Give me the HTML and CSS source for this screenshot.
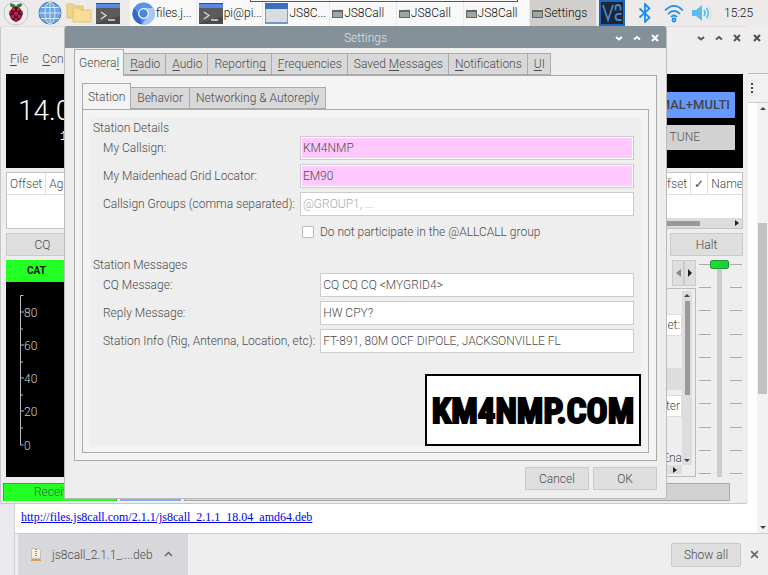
FILE: index.html
```html
<!DOCTYPE html>
<html lang="en">
<head>
<meta charset="utf-8">
<title>Settings</title>
<link rel="stylesheet" href="styles.css">
</head>
<body>
<svg width="0" height="0" class="defs" aria-hidden="true">
  <symbol id="terminal" viewBox="0 0 24 21">
    <path fill="#4a4a4a" d="M0 0h24v21H0z"/><path fill="#5b5b5b" d="M0 5h24v8L0 20z"/><path fill="#5b87ea" d="M0 1h24v4H0z"/>
    <path fill="none" stroke="#ddd" stroke-width="1.3" d="M5 9l5 3.500-5 3.500M12 17h7"/>
  </symbol>
  <symbol id="win" viewBox="0 0 11 9">
    <path fill="#666" d="M0 1h11v8H0z"/><path fill="#9aa9a5" d="M1 3h9v5H1z"/><path fill="#ddd" d="M6 0h4v1H6z"/>
  </symbol>
  <symbol id="down" viewBox="0 0 8 8"><path fill="none" stroke="currentColor" stroke-width="2" d="M1 3l3 2.500L7 3"/></symbol>
  <symbol id="up" viewBox="0 0 8 8"><path fill="none" stroke="currentColor" stroke-width="2" d="M1 5.500L4 3l3 2.500"/></symbol>
  <symbol id="close" viewBox="0 0 8 8"><path fill="none" stroke="currentColor" stroke-width="2" d="M1 1l6 6M7 1L1 7"/></symbol>
</svg>

<header class="taskbar">
  <nav class="launchers" aria-label="Launchers">
    <button aria-label="Menu"><svg width="26" height="26" viewBox="0 0 26 26"><circle cx="13" cy="13" r="12" fill="#eee" stroke="#c8c8c8"/><path fill="#397b32" d="M12.500 8C8 8 6.500 6 7 3.500c3-.5 5 .5 6 3 1-2.500 3-3.500 6-3C19.500 6 17.500 8 12.500 8z"/><path fill="#3b1020" d="M13 7c3 0 4 1 5 3 2 1 2.500 4 1 6-.5 3-3 5-6 6-3-1-5.500-3-6-6-1.500-2-1-5 1-6 1-2 2-3 5-3z"/><g fill="#c51a4a"><circle cx="13" cy="13.500" r="2.300"/><circle cx="10.500" cy="9.500" r="1.800"/><circle cx="15.500" cy="9.500" r="1.800"/><circle cx="9.500" cy="16.500" r="2"/><circle cx="16.500" cy="16.500" r="2"/><circle cx="13" cy="19.500" r="1.700"/><circle cx="7.700" cy="12.500" r="1.300"/><circle cx="18.300" cy="12.500" r="1.300"/></g></svg></button>
    <button aria-label="Web browser"><svg width="24" height="24" viewBox="0 0 24 24"><circle cx="12" cy="12" r="11" fill="#6da4e3" stroke="#4679b6"/><g fill="none" stroke="#d5e6f7"><ellipse cx="12" cy="12" rx="5" ry="11"/><path d="M12 1v22M1 12h22M3 6.500h18M3 17.500h18"/></g></svg></button>
    <button aria-label="File manager"><svg width="26" height="22" viewBox="0 0 26 22"><path fill="#f0d38b" stroke="#e2c075" d="M1 2h6l2 2h8v12H1z"/><path fill="#f9dc98" stroke="#e2c075" d="M7 6h6l2 2h10v12H7z"/></svg></button>
    <button aria-label="Terminal"><svg width="24" height="21"><use href="#terminal"/></svg></button>
  </nav>
  <div class="tasks">
    <button class="task"><svg width="23" height="23" viewBox="0 0 23 23"><circle cx="11.500" cy="11.500" r="11" fill="#5a91e8"/><path fill="#3568c7" d="M2 6l6 8 2 8.500A11 11 0 0 1 2 6z"/><path fill="#a5c6f7" d="M11.500 6h10A11 11 0 0 1 10 22.500l5.500-8z"/><circle cx="11.500" cy="11.500" r="5.400" fill="#fff"/><circle cx="11.500" cy="11.500" r="4.200" fill="#4a86e8"/></svg><span>files.j...</span></button>
    <button class="task"><svg width="24" height="21"><use href="#terminal"/></svg><span>pi@pi...</span></button>
    <button class="task"><svg width="23" height="21" viewBox="0 0 23 21"><path fill="#d9dde1" stroke="#8c98a8" d="M.5.500h22v20H.5z"/><path fill="#3c70bd" d="M0 0h23v6H0z"/><path fill="#7597c8" d="M0 19h23v2H0z"/></svg><span>JS8C...</span></button>
    <button class="task"><svg width="11" height="9"><use href="#win"/></svg><span>JS8Call</span></button>
    <button class="task"><svg width="11" height="9"><use href="#win"/></svg><span>JS8Call</span></button>
    <button class="task"><svg width="11" height="9"><use href="#win"/></svg><span>JS8Call</span></button>
    <button class="task active"><svg width="11" height="9"><use href="#win"/></svg><span>Settings</span></button>
  </div>
  <div class="tray">
    <svg width="26" height="26" viewBox="0 0 26 26"><path fill="#1f2630" stroke="#1d66c2" stroke-width="2" d="M1 1h24v24H1z"/><g fill="none" stroke="#3f87dc" stroke-width="1.800"><path d="M4 5l5 15 5-15M16.500 10.500V7.500Q16.500 5 19 5t2.500 2.500v3M22.500 14h-3q-3 0-3 3t3 3h3"/></g></svg>
    <svg width="14" height="20" viewBox="0 0 14 20"><path fill="none" stroke="#1b8df2" stroke-width="1.800" d="M1.500 5.500l10 9L7 19V1l4.500 4.500-10 9"/></svg>
    <svg width="20" height="19" viewBox="0 0 20 19"><g fill="none" stroke="#1b8df2" stroke-width="1.700"><path d="M1 6.500q9-9 18 0M4 10q6-6 12 0M7 13q3-3 6 0"/><circle cx="10" cy="16" r="1.600"/></g></svg>
    <svg width="20" height="16" viewBox="0 0 20 16"><path fill="#59bcf5" d="M0 5h4l6-5v16l-6-5H0z"/><path fill="none" stroke="#59bcf5" stroke-width="1.600" d="M12 5q2 3 0 6M14.500 3q3.500 5 0 10"/><path fill="none" stroke="#d2d8dc" d="M17 1q4 7 0 14"/></svg>
    <time>15:25</time>
  </div>
</header>
<div class="tip-edge"></div>

<section class="browser" aria-label="Browser">
  <div class="browser-title"><svg width="8" height="8"><use href="#close"/></svg></div>
  <div class="browser-tools"><svg width="4" height="12" viewBox="0 0 4 12"><path fill="#444" d="M1 1h2v2H1zM1 5h2v2H1zM1 9h2v2H1z"/></svg></div>
  <div class="browser-view">
    <div class="page"><a href="http://files.js8call.com/2.1.1/js8call_2.1.1_18.04_amd64.deb">http://files.js8call.com/2.1.1/js8call_2.1.1_18.04_amd64.deb</a></div>
    <div class="vbar"><i class="tri-up"></i><i class="vthumb"></i><i class="tri-down"></i></div>
  </div>
  <footer class="downloads">
    <button class="download"><svg width="10" height="13" viewBox="0 0 10 13"><path fill="#f7efdf" stroke="#c9c1b6" d="M.5.500h7l2 2v8h-9z"/><path stroke="#c98937" stroke-width="2" stroke-dasharray="1 1" d="M5 1v8"/><path fill="#d6a157" d="M0 11h10v2H0z"/></svg><span>js8call_2.1.1_....deb</span><svg width="9" height="9" viewBox="0 0 9 9"><path fill="none" stroke="#666" stroke-width="1.500" d="M1 6l3.500-3.500L8 6"/></svg></button>
    <button class="btn show-all">Show all</button>
    <button class="plain" aria-label="Close downloads"><svg width="9" height="9" viewBox="0 0 8 8"><path stroke="#666" stroke-width="1.500" d="M1 1l6 6M7 1L1 7"/></svg></button>
  </footer>
</section>

<section class="js8" aria-label="JS8Call">
  <div class="js8-title"><svg width="8" height="8"><use href="#down"/></svg><svg width="8" height="8"><use href="#up"/></svg><svg width="8" height="8"><use href="#close"/></svg></div>
  <nav class="menubar"><a href="#"><u>F</u>ile</a><a href="#"><u>C</u>on</a></nav>
  <div class="display">
    <div class="freq"><div class="digits">14.0</div><div class="date">1</div></div>
    <div class="modes"><button class="multi">NORMAL+MULTI</button><button class="tune">TUNE</button></div>
  </div>
  <div class="lists">
    <table class="list"><thead><tr><th>Offset</th><th>Age</th></tr></thead></table>
    <div class="calls">
      <table class="list"><thead><tr><th>Offset</th><th>✓</th><th>Name</th></tr></thead></table>
      <div class="hbar"><i class="hthumb"></i><i class="tri-right"></i></div>
    </div>
  </div>
  <div class="actions"><button class="btn">CQ</button><button class="btn">Halt</button></div>
  <div class="main">
    <div class="meter">
      <button class="cat">CAT</button>
      <svg class="scale" width="60" height="195" viewBox="0 0 60 195" role="img" aria-label="Level scale">
        <path fill="none" stroke="#bbb" d="M17.500 13.500h-3V163h3M15 30h3M15 47h2M15 63h3M15 80h2M15 96h3M15 113h2M15 129h3M15 146h2"/>
        <g class="scale-text"><text x="18" y="35">80</text><text x="18" y="68">60</text><text x="18" y="101">40</text><text x="18" y="134">20</text><text x="18" y="168">0</text></g>
      </svg>
    </div>
    <div class="control">
      <div class="arrows"><button aria-label="Previous tab"><i class="tri-left"></i></button><button aria-label="Next tab"><i class="tri-right"></i></button></div>
      <div class="control-pane">
        <div class="fields"><span class="field first">Offset:</span><span class="shade"></span><span class="field">Filter</span><span class="more">Ena</span></div>
        <div class="control-bar"><i class="tri-up"></i><i class="cthumb"></i><i class="tri-down"></i></div>
        <div class="control-hbar"><i class="tri-right"></i></div>
      </div>
    </div>
    <div class="slider">
      <div class="ticks"><i></i><i></i><i></i><i></i><i></i><i></i><i></i><i></i><i></i><i></i></div>
      <input type="range" class="power" aria-label="Power" value="100">
    </div>
  </div>
  <div class="status"><span class="receiving">Receiving</span><span class="mode"></span><span class="progress"></span></div>
</section>

<section class="dialog" role="dialog" aria-label="Settings">
  <div class="dialog-title"><h1>Settings</h1><div class="wm"><svg width="8" height="8"><use href="#down"/></svg><svg width="8" height="8"><use href="#up"/></svg><svg width="8" height="8"><use href="#close"/></svg></div></div>
  <div class="dialog-body">
    <div class="tabs outer">
      <button class="tab on">Genera<u>l</u></button><button class="tab"><u>R</u>adio</button><button class="tab"><u>A</u>udio</button><button class="tab">Reportin<u>g</u></button><button class="tab"><u>F</u>requencies</button><button class="tab">Saved <u>M</u>essages</button><button class="tab"><u>N</u>otifications</button><button class="tab"><u>U</u>I</button>
    </div>
    <div class="pane">
      <div class="tabs">
        <button class="tab on">Station</button><button class="tab">Behavior</button><button class="tab">Networking &amp; Autoreply</button>
      </div>
      <div class="pane inner">
        <form class="form">
          <h2>Station Details</h2>
          <div class="grid details">
            <label for="call">My Callsign:</label><input class="pink" id="call" value="KM4NMP">
            <label for="loc">My Maidenhead Grid Locator:</label><input class="pink" id="loc" value="EM90">
            <label for="groups">Callsign Groups (comma separated):</label><input id="groups" placeholder="@GROUP1, ...">
            <div class="check"><input type="checkbox" id="allcall"><label for="allcall">Do not participate in the @ALLCALL group</label></div>
          </div>
          <h2>Station Messages</h2>
          <div class="grid messages">
            <label for="cq">CQ Message:</label><input id="cq" value="CQ CQ CQ &lt;MYGRID4&gt;">
            <label for="reply">Reply Message:</label><input id="reply" value="HW CPY?">
            <label for="info">Station Info (Rig, Antenna, Location, etc):</label><input id="info" value="FT-891, 80M OCF DIPOLE, JACKSONVILLE FL">
          </div>
        </form>
        <div class="badge">KM4NMP.COM</div>
      </div>
    </div>
    <div class="dialog-buttons"><button class="btn">Cancel</button><button class="btn">OK</button></div>
  </div>
</section>
</body>
</html>
```
FILE: styles.css
```css
* { box-sizing: border-box; }
html, body { height: 100%; }
body {
  margin: 0;
  overflow: hidden;
  position: relative;
  background: #e9e9ef;
  color: #4c4c4c;
  font: 300 12px/16px Roboto, "Open Sans", sans-serif;
}
button, input { font: inherit; color: inherit; margin: 0; padding: 0; border: 0; border-radius: 0; }
button { background: none; white-space: nowrap; }
svg, i { display: block; flex: none; }
a { color: inherit; text-decoration: none; }
u { text-underline-offset: 2px; }
.defs { position: absolute; }

/* Task bar */
.taskbar { display: flex; height: 26px; background: #edebea; color: #111; }
.launchers { display: flex; align-items: center; gap: 4px; width: 130px; padding-left: 3px; }
.launchers button:first-child { margin-right: 5px; }
.tasks { flex: 1; display: grid; grid-template-columns: repeat(7, minmax(0, 1fr)); background: #e9e9e9; column-gap: 1px; }
.task { display: flex; align-items: center; gap: 1px; padding-left: 2px; background: #f8f8f8; overflow: hidden; }
.task.active { background: #d0cfcc; }
.tray { display: flex; align-items: center; width: 172px; padding-left: 3px; }
.tray svg:nth-child(2) { margin-left: 13px; }
.tray svg:nth-child(3) { margin-left: 12px; }
.tray svg:nth-child(4) { margin-left: 8px; }
.tray time { margin-left: 12px; }
.tip-edge { position: absolute; left: 250px; top: 0; width: 268px; height: 2px; border: 1px solid #555; border-top: 0; }

/* Browser window */
.browser { position: absolute; inset: 26px 0 0 14px; display: flex; flex-direction: column; background: #fff; border-left: 1px solid #d0d0d0; }
.browser-title { display: flex; justify-content: flex-end; height: 48px; padding: 8px 7px; background: #eee; border-bottom: 1px solid #bbb; }
.browser-tools { display: flex; justify-content: flex-end; align-items: center; height: 29px; padding-right: 14px; background: #f1f1f1; border-bottom: 1px solid #ccc; }
.browser-view { flex: 1; display: flex; min-height: 0; }
.page { flex: 1; display: flex; align-items: flex-end; padding: 0 6px 8px; }
.page a { color: #00e; text-decoration: underline; font: 400 12px/16px "Liberation Serif", serif; }
.vbar { display: flex; flex-direction: column; align-items: center; width: 11px; padding: 4px 0; background: #f2f2f2; }
.vthumb { width: 9px; height: 171px; margin: 113px 0 auto; background: #c1c1c1; }
.downloads { display: flex; align-items: center; height: 42px; padding-right: 9px; background: #eee; border-top: 1px solid #ccc; }
.download { display: flex; align-items: center; align-self: stretch; gap: 11px; width: 170px; padding-left: 13px; margin-left: 3px; background: #d8d8dc; }
.show-all { width: 70px; height: 24px; margin-left: auto; margin-right: 9px; border-radius: 2px; }

.tri-up, .tri-down { border: 3px solid transparent; }
.tri-up { border-top: 0; border-bottom-color: #444; }
.tri-down { border-bottom: 0; border-top-color: #444; }
.tri-left, .tri-right { border: 3px solid transparent; }
.tri-left { border-left: 0; border-right: 5px solid #888; }
.tri-right { border-right: 0; border-left: 4px solid #222; }
.arrows i { border-top-width: 4px; border-bottom-width: 4px; }

.btn { background: #dedede; border: 1px solid #c9c9c9; box-shadow: inset 0 0 0 1px #e0e0e0; }

/* Main application window */
.js8 { position: absolute; inset: 26px 20px 71px 0; display: flex; flex-direction: column; padding: 0 5px; background: #eee; border: 1px solid #c8c8c8; border-right: 0; border-top-color: #ddd; border-radius: 3px; }
.js8-title { display: flex; flex: none; justify-content: flex-end; gap: 10px; height: 24px; padding: 7px 2px 0; color: #555; }
.menubar { display: flex; flex: none; gap: 14px; height: 23px; padding-left: 4px; }
.display { display: flex; flex: none; justify-content: space-between; height: 94px; background: #000; color: #fff; }
.freq { padding: 21px 0 0 12px; }
.digits { font-size: 28px; line-height: 32px; }
.date { padding: 2px 0 0 42px; font-family: "Liberation Mono", monospace; }
.modes { display: flex; flex-direction: column; gap: 7px; padding: 18px 8px; width: 134px; color: #444; }
.modes button { height: 26px; border-radius: 1px; text-align: right; }
.modes .multi { background: #69f; font-size: 13px; font-weight: 500; padding-right: 5px; }
.modes .tune { background: #d2d2d2; padding-right: 35px; color: #555; }
.lists { display: flex; flex: none; justify-content: space-between; height: 57px; margin-top: 4px; background: #fff; border: 1px solid #c4c4c4; overflow: hidden; }
.list { border-collapse: collapse; height: 22px; }
.list th { font-weight: 300; padding: 0 3px; border-right: 1px solid #ddd; border-bottom: 1px solid #ddd; }
.calls { display: flex; flex-direction: column; justify-content: space-between; width: 90px; }
.calls th:last-child { border-right: 0; padding-right: 0; }
.hbar { display: flex; justify-content: space-between; align-items: center; height: 10px; padding-right: 3px; background: #ddd; }
.hthumb { width: 48px; height: 5px; background: #999; }
.actions { display: flex; justify-content: space-between; margin-top: 4px; }
.actions .btn { width: 73px; height: 23px; }
.main { flex: 1; display: flex; min-height: 0; margin-top: 4px; }
.meter { flex: 1; background: #000; }
.cat { display: block; width: 100%; height: 22px; padding-left: 21px; background: #2f2; color: #111; text-align: left; font-size: 10px; font-weight: 700; }
.scale-text { fill: #ccc; }
.control { display: flex; flex-direction: column; width: 60px; }
.arrows { display: flex; flex: none; justify-content: flex-end; height: 26px; }
.arrows button { display: grid; place-items: center; width: 12px; background: #dedede; border: 1px solid #ccc; }
.control-pane { flex: 1; display: grid; grid-template: minmax(0, 1fr) 9px / 1fr 10px; min-height: 0; margin-top: 2px; padding: 2px 3px; border: 1px solid #bbb; border-left: 0; }
.fields { display: flex; flex-direction: column; text-align: right; overflow: hidden; }
.fields > * { flex: none; }
.field { padding: 2px 1px; background: #fff; border: 1px solid #ddd; }
.field.first { margin-top: 23px; }
.shade { height: 22px; margin: 32px 0 5px; background: #ddd; }
.more { margin-top: 33px; }
.control-bar { display: flex; flex-direction: column; align-items: center; padding: 3px 0; background: #ddd; }
.cthumb { width: 5px; height: 94px; background: #999; margin: 4px 0 auto; }
.control-hbar { display: flex; align-items: center; justify-content: flex-end; padding-right: 5px; background: #ddd; }
.slider { position: relative; display: grid; width: 47px; }
.slider > * { grid-area: 1 / 1; }
.ticks { display: flex; flex-direction: column; justify-content: space-between; padding: 4px 1px 3px 3px; }
.ticks i { height: 1px; border: solid #aaa; border-width: 0 12px; }
.power { appearance: none; writing-mode: vertical-lr; direction: rtl; justify-self: center; width: 19px; height: 100%; background: linear-gradient(90deg, transparent 7px, #ccc 7px 12px, transparent 12px); }
.power::-webkit-slider-thumb { appearance: none; width: 19px; height: 9px; border: 1px solid #1b9c35; border-radius: 2px; background: linear-gradient(110deg, #18e622, #23c44d); }
.status { display: flex; flex: none; align-items: stretch; height: 18px; margin: 6px 13px 2px -3px; }
.receiving { width: 114px; padding-left: 30px; background: #2f2; border: 1px solid #3a3; border-bottom: 0; color: #363; }
.mode { width: 61px; margin-left: 3px; background: #8ae; }
.progress { flex: 1; margin-left: 3px; background: #d2d2d2; border: 1px solid #aaa; }

/* Settings dialog */
.dialog { position: absolute; inset: 26px 101px 76px 64px; display: flex; flex-direction: column; background: #eee; border: solid #bbb; border-width: 0 1px 1px; border-radius: 3px 3px 0 0; overflow: hidden; }
.dialog-title { display: grid; grid-template-columns: 1fr auto 1fr; align-items: center; height: 22px; margin: 0 -1px; padding-top: 2px; background: #849199; color: #dde2e5; flex: none; }
.dialog-title h1 { grid-column: 2; margin: 0; font: inherit; }
.wm { display: flex; justify-content: flex-end; gap: 10px; padding-right: 8px; color: #fff; }
.dialog-body { flex: 1; display: flex; flex-direction: column; padding: 1px 9px 8px; min-height: 0; }
.tabs { display: flex; align-items: flex-end; position: relative; }
.tab { height: 22px; padding: 0 6px; background: #d8d8d8; border: 1px solid #aaa; border-left: 0; }
.outer .tab { padding: 0 5px 0 6px; }
.tabs .tab.on { height: 27px; padding: 0 5px; background: #f3f3f3; border-left: 1px solid #aaa; border-bottom: 0; margin-bottom: -1px; }
.outer .tab.on { padding: 0 4px; }
.pane { flex: 1; display: flex; flex-direction: column; min-height: 0; padding: 7px; background: #f3f3f3; border: 1px solid #aaa; }
.pane.inner { position: relative; }
.form { flex: 1; padding: 3px 7px 0 3px; background: #eee; }
.form h2 { margin: 0; font: inherit; }
.grid { display: grid; grid-template-columns: auto 1fr; gap: 4px 5px; align-items: center; padding-left: 10px; }
.grid > input { height: 24px; min-width: 0; padding: 0 2px; background: #fff; border: 1px solid #ccc; }
.grid > input.pink { background: #ffc9ff; box-shadow: inset 0 0 0 1px #fff; }
.grid input::placeholder { color: #aaa; }
.check { grid-column: 2; display: flex; align-items: center; gap: 6px; padding: 4px 2px 2px; }
.check input { appearance: none; width: 12px; height: 12px; background: #fff; border: 1px solid #bbb; border-radius: 1px; }
.details { margin-bottom: 15px; }
.badge { position: absolute; right: 7px; bottom: 6px; display: grid; place-items: center; width: 216px; height: 72px; background: #fff; border: 2px solid #000; color: #000; font: 700 35px/40px Impact, "Roboto Condensed", "Liberation Sans Narrow", sans-serif; -webkit-text-stroke: 2px #000; padding-top: 3px; }
.dialog-buttons { display: flex; justify-content: flex-end; gap: 4px; margin-top: 6px; }
.dialog-buttons .btn { width: 64px; height: 23px; }
```
